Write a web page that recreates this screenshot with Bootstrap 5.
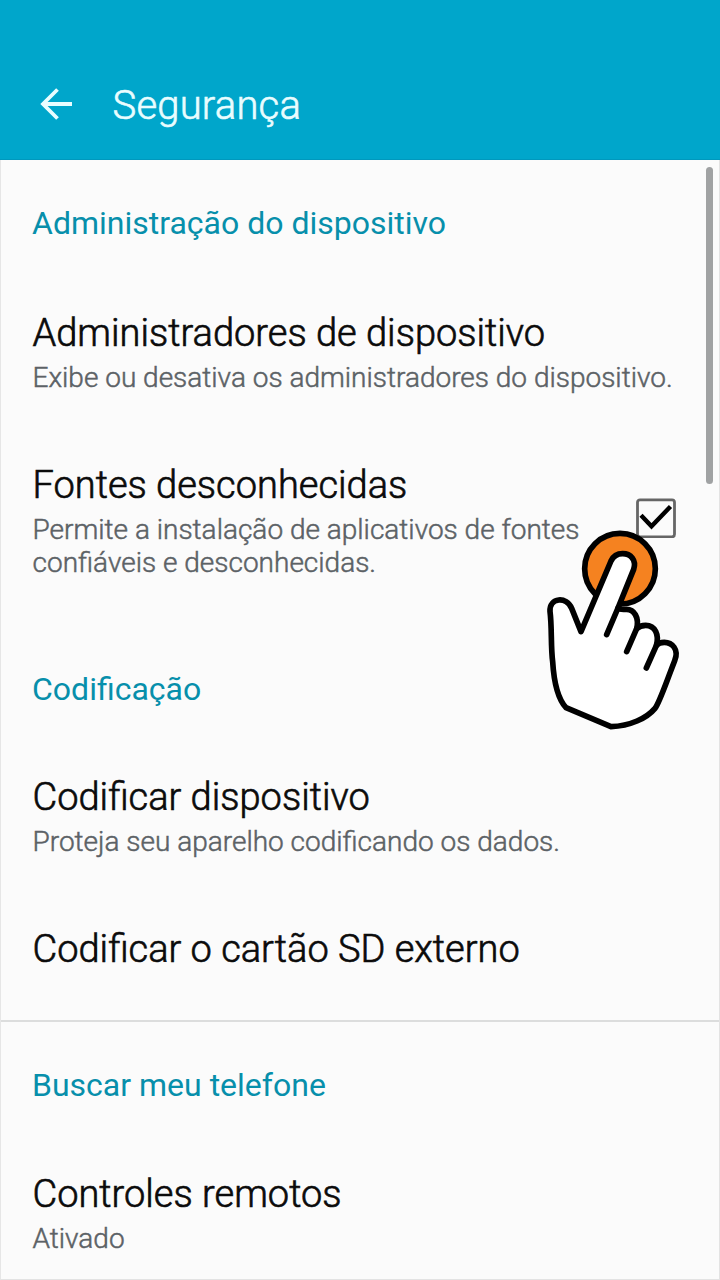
<!DOCTYPE html>
<html lang="pt-BR">
<head>
<meta charset="utf-8">
<meta name="viewport" content="width=device-width, initial-scale=1">
<title>Segurança</title>
<link href="https://cdn.jsdelivr.net/npm/bootstrap@5.3.0/dist/css/bootstrap.min.css" rel="stylesheet">
<style>
body{font-family:Roboto,"Liberation Sans",sans-serif;background:#fbfbfb;color:#0b0b0b;height:1280px;overflow:hidden}
.app-bar{background:#00a6cb;height:160px;padding:50px 40px 0 39px;color:#e9fdff;border-bottom:1px solid #0098bd}
.app-title{font-size:40px;line-height:50px;font-weight:300;letter-spacing:.2px;margin-left:39.5px;padding-top:3px;-webkit-text-stroke:.6px}
.settings{height:1120px;padding-top:43px;border-left:1px solid #e6e6e6;border-right:1px solid #e3e3e3;border-bottom:1px solid #e3e3e3}
.group-title{font-size:32px;line-height:40px;color:#078fab;padding-left:31px}
.entry{padding-left:31.5px}
.entry-title{font-size:38px;line-height:50px;font-weight:300;-webkit-text-stroke:.65px}
.entry-note{font-size:28px;line-height:33px;margin-top:3px;font-weight:300;color:#5c6266;-webkit-text-stroke:.5px}
.after-group{margin-top:64px}
.first-entry{margin-top:65px}
.after-entry{margin-top:66px}
.group-gap{margin-top:90px}
.divider{border-top:2px solid #dcdddd;margin-top:46px}
.divider + .group-title{margin-top:43px}
.scroll-thumb{right:6px;top:7px;width:7px;height:317px;background:#a0a2a3}
.check-box{left:634px;top:337px}
.tap-hand{left:529px;top:320px}
</style>
</head>
<body>
<header class="app-bar d-flex align-items-center">
  <svg width="34" height="34" viewBox="0 0 34 34" fill="none" stroke="#e9fdff" stroke-width="3.8"><path d="M33 16H4M18.5 1.5L4 16L18.5 30.5"/></svg>
  <h1 class="app-title mb-0">Segurança</h1>
</header>
<main class="settings position-relative">
  <h2 class="group-title mb-0 fw-normal">Administração do dispositivo</h2>
  <div class="entry first-entry">
    <div class="entry-title">Administradores de dispositivo</div>
    <div class="entry-note">Exibe ou desativa os administradores do dispositivo.</div>
  </div>
  <div class="entry after-entry">
    <div class="entry-title">Fontes desconhecidas</div>
    <div class="entry-note">Permite a instalação de aplicativos de fontes<br>confiáveis e desconhecidas.</div>
  </div>
  <h2 class="group-title group-gap mb-0 fw-normal">Codificação</h2>
  <div class="entry" style="margin-top:63px">
    <div class="entry-title">Codificar dispositivo</div>
    <div class="entry-note">Proteja seu aparelho codificando os dados.</div>
  </div>
  <div class="entry after-entry">
    <div class="entry-title">Codificar o cartão SD externo</div>
  </div>
  <div class="divider"></div>
  <h2 class="group-title mb-0 fw-normal">Buscar meu telefone</h2>
  <div class="entry after-group">
    <div class="entry-title">Controles remotos</div>
    <div class="entry-note">Ativado</div>
  </div>
  <div class="scroll-thumb position-absolute rounded-pill"></div>
  <svg class="check-box position-absolute" width="41" height="41" viewBox="0 0 41 41" fill="none"><rect x="2.5" y="2.8" width="37" height="37" rx="2.5" stroke="#666" stroke-width="2.8"/><path d="M6 18.2L16.5 29.2L35.5 9.5" stroke="#000" stroke-width="4.4"/></svg>
  <svg class="tap-hand position-absolute" width="190" height="260" viewBox="0 0 570 780" stroke="#000" stroke-width="17" stroke-linejoin="round" stroke-linecap="round">
    <circle cx="270" cy="266" r="106" fill="#f58220"/>
    <path fill="#fff" d="M153 455L125 385C110 348 58 352 60 394C66 440 62 500 68 545C72 610 82 655 108 683L243 740C300 738 350 715 375 685C388 668 400 630 434 542C448 508 426 487 403 487C392 487 384 490 379 497C388 465 376 436 347 436C336 436 326 440 320 446C328 412 312 388 290 388C280 388 270 390 264 384L311 268C320 240 302 221 278 221C260 221 249 230 243 243Z"/>
    <path fill="none" d="M264 384L230 464M320 446L290 515M379 497L349 564"/>
  </svg>
</main>
<script src="https://cdn.jsdelivr.net/npm/bootstrap@5.3.0/dist/js/bootstrap.bundle.min.js"></script>
</body>
</html>
